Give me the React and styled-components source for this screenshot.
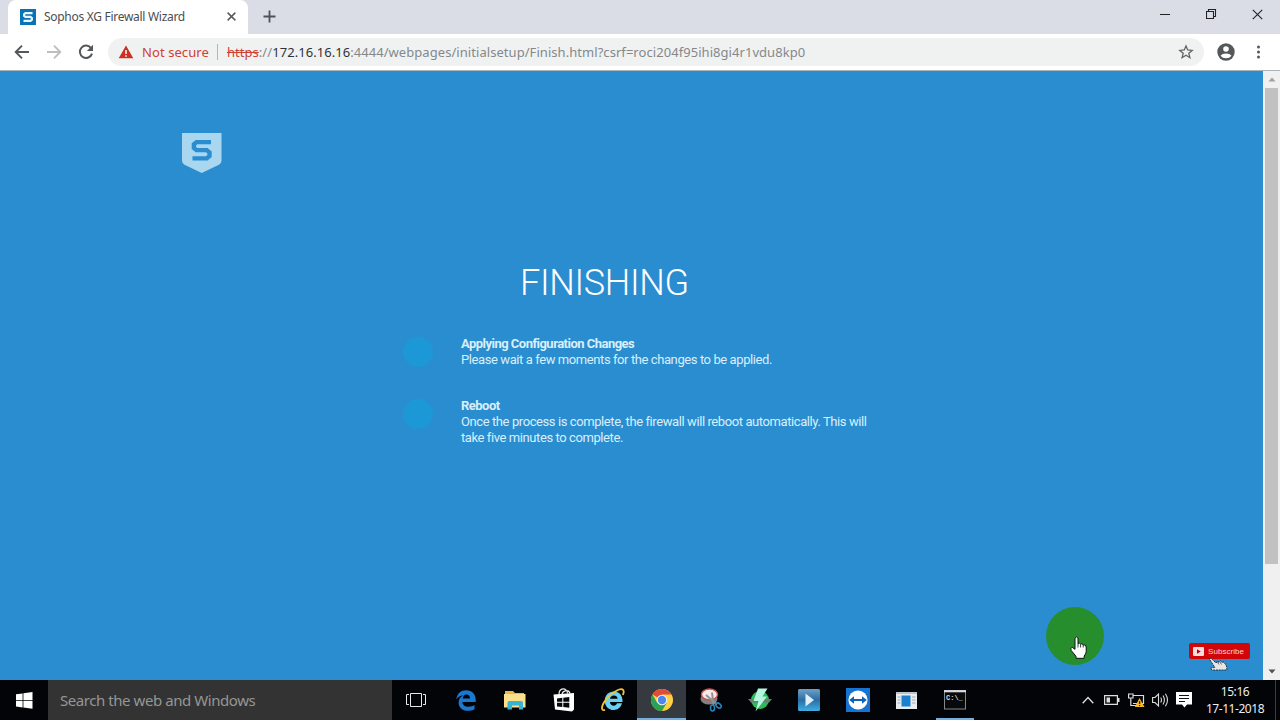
import styled, { createGlobalStyle } from "styled-components";

const GlobalStyle = createGlobalStyle`
  * {
    box-sizing: border-box;
  }

  body {
    margin: 0;
    overflow: hidden;
    font-family: "Open Sans", "Noto Sans", sans-serif;
  }

  svg {
    display: block;
    flex-shrink: 0;
  }
`;

const Screen = styled.div`
  position: relative;
  width: 1280px;
  height: 720px;
  display: flex;
  flex-direction: column;
  overflow: hidden;
`;

/* browser */

const TabStrip = styled.header`
  height: 34px;
  display: flex;
  align-items: stretch;
  padding-left: 8px;
  background-color: #dadde6;
`;

const Tab = styled.div`
  width: 240px;
  display: flex;
  align-items: center;
  padding: 0 12px 1px 12px;
  background-color: #ffffff;
  border-radius: 8px 8px 0 0;
`;

const TabTitle = styled.span`
  flex: 1;
  margin-left: 8px;
  font-family: "Noto Sans", sans-serif;
  font-size: 12px;
  letter-spacing: -0.29px;
  color: #4b4d50;
  white-space: nowrap;
`;

const NewTab = styled.div`
  display: flex;
  align-items: center;
  padding: 0 0 1px 15px;
`;

const WindowControls = styled.div`
  margin-left: auto;
  display: flex;
  align-items: center;
  gap: 34px;
  padding: 0 17px 6px 0;
`;

const Toolbar = styled.div`
  height: 37px;
  display: flex;
  align-items: center;
  padding: 0 12px 1px 14px;
  background-color: #ffffff;
  border-bottom: 1px solid #a9b3b8;
`;

const NavButtons = styled.div`
  display: flex;
  flex-shrink: 0;
  gap: 16px;
  width: 94px;
`;

const AddressBar = styled.div`
  width: 1096px;
  height: 28px;
  flex-shrink: 0;
  display: flex;
  align-items: center;
  padding: 0 10px;
  border-radius: 14px;
  background-color: #f0f2f2;
  font-family: "Noto Sans", sans-serif;
  font-size: 13px;
`;

const Warning = styled.span`
  margin-left: 8px;
  color: #cf4034;
  letter-spacing: 0.08px;
  white-space: nowrap;
`;

const Divider = styled.span`
  width: 1px;
  height: 16px;
  margin: 0 9px 0 8px;
  background-color: #b4b6b8;
`;

const Url = styled.span`
  flex: 1;
  color: #85888b;
  letter-spacing: 0.055px;
  white-space: nowrap;
`;

const Scheme = styled.s`
  color: #cf4034;
`;

const Host = styled.span`
  color: #303336;
`;

const ToolbarMenu = styled.div`
  display: flex;
  align-items: center;
  gap: 14px;
  margin-left: 13px;
`;

/* page */

const Viewport = styled.div`
  height: 609px;
  display: flex;
`;

const Page = styled.main`
  width: 1263px;
  display: flex;
  flex-direction: column;
  padding-top: 62px;
  background-color: #2a8dd0;
`;

const Brand = styled.div`
  height: 40px;
  padding-left: 182px;
`;

const Title = styled.h1`
  margin: 88px 0 0 520px;
  height: 44px;
  line-height: 44px;
  font-family: Roboto, sans-serif;
  font-size: 36px;
  font-weight: 300;
  letter-spacing: -0.3px;
  color: #ffffff;
`;

const Steps = styled.div`
  display: flex;
  flex-direction: column;
  gap: 30px;
  margin: 31px 0 0 403px;
`;

const Step = styled.section`
  display: flex;
  align-items: flex-start;
  gap: 28px;
`;

const StepDot = styled.div`
  width: 30px;
  height: 30px;
  margin-top: 1px;
  border-radius: 50%;
  background-color: #1d98d6;
`;

const StepText = styled.div`
  font-family: Roboto, sans-serif;
  font-size: 13px;
  line-height: 16px;
  color: #d8effc;
`;

const StepTitle = styled.strong`
  display: block;
  font-weight: 700;
  letter-spacing: -0.52px;
  color: #d8effc;
`;

const StepLine = styled.span`
  display: block;
  letter-spacing: -0.41px;
  white-space: nowrap;
`;

const Scrollbar = styled.div`
  width: 17px;
  display: flex;
  flex-direction: column;
  align-items: center;
  background-color: #f0f0f0;
`;

const ScrollButton = styled.div`
  height: 17px;
  display: flex;
  align-items: center;
`;

const ScrollThumb = styled.div`
  width: 13px;
  height: 476px;
  margin-bottom: auto;
  background-color: #c1c1c1;
`;

/* taskbar */

const Taskbar = styled.footer`
  height: 40px;
  display: flex;
  background-color: #020407;
`;

const StartButton = styled.div`
  width: 48px;
  display: flex;
  align-items: center;
  justify-content: center;
`;

const SearchBox = styled.div`
  width: 344px;
  display: flex;
  align-items: center;
  padding: 0 12px;
  background-color: #333333;
  color: #969696;
  font-family: "Noto Sans", sans-serif;
  font-size: 15px;
  letter-spacing: -0.44px;
  white-space: nowrap;
`;

const TaskList = styled.div`
  display: flex;
`;

const TaskItem = styled.div`
  width: 49px;
  height: 40px;
  display: flex;
  align-items: center;
  justify-content: center;
  background-color: ${(props) => (props.$active ? "#343a40" : "transparent")};
  border-bottom: 2px solid ${(props) => (props.$active ? "#76aede" : "transparent")};
  padding-top: 2px;
`;

const RunningItem = styled(TaskItem)`
  width: 38px;
  margin-left: 5px;
  border-bottom-color: #76aede;
`;

const Tray = styled.div`
  margin-left: auto;
  display: flex;
  align-items: center;
  gap: 4px;
`;

const TrayIcon = styled.div`
  width: 20px;
  display: flex;
  justify-content: center;
`;

const Clock = styled.div`
  width: 76px;
  font-family: "Noto Sans", sans-serif;
  font-size: 12px;
  line-height: 17px;
  letter-spacing: -0.45px;
  text-align: center;
  color: #ededed;
  white-space: nowrap;
  padding: 0 2px 1px 0;
`;

const ShowDesktop = styled.div`
  width: 5px;
  height: 40px;
  margin-left: -3px;
  border-left: 1px solid #3c3e41;
`;

/* things floating over the desktop */

const ClickHighlight = styled.div`
  position: absolute;
  left: 1046px;
  top: 607px;
  width: 58px;
  height: 58px;
  padding: 29px 0 0 24px;
  border-radius: 50%;
  background-color: #278e2e;
`;

const Subscribe = styled.div`
  position: absolute;
  left: 1189px;
  top: 643px;
  width: 61px;
  height: 16px;
  display: flex;
  align-items: center;
  gap: 4px;
  padding-left: 4px;
  border-radius: 2px;
  background-color: #d20508;
  color: #f3d5d5;
  font-family: "Liberation Sans", Arial, sans-serif;
  font-size: 8px;
  letter-spacing: 0.05px;
`;

const SubscribeHand = styled.div`
  position: absolute;
  left: 1208px;
  top: 658px;
`;

const SophosS = ({ color, width }) => (
  <path
    d="M19.5 2.5H5L2.4 4.7V8.3L5 10.5H15.3L18 12.8V16.5L15.3 18.8H1"
    fill="none"
    stroke={color}
    strokeWidth={width}
  />
);

const Favicon = () => (
  <svg width="16" height="16" viewBox="0 0 16 16">
    <rect width="16" height="16" fill="#0873b5" />
    <g transform="translate(3 3) scale(.49 .47)">
      <SophosS color="#e8f6fc" width="4.6" />
    </g>
  </svg>
);

const SophosShield = () => (
  <svg width="40" height="40" viewBox="0 0 40 40">
    <path d="M0 0H39.5V27.5Q39.5 30.5 37 31.8L19.7 40L2.5 31.8Q0 30.5 0 27.5Z" fill="#a9d7ef" />
    <g transform="translate(9.5 6.6)">
      <SophosS color="#2a8dd0" width="4.4" />
    </g>
  </svg>
);

const Cross = ({ size, color, width }) => (
  <svg width={size} height={size} viewBox="0 0 10 10">
    <path d="M.7 .7L9.3 9.3M9.3 .7L.7 9.3" stroke={color} strokeWidth={width} />
  </svg>
);

const Arrow = ({ color, flip }) => (
  <svg width="16" height="16" viewBox="0 0 16 16">
    <path
      d="M15 8H2M8 1.7L1.7 8L8 14.3"
      transform={flip ? "translate(16 0) scale(-1 1)" : undefined}
      fill="none"
      stroke={color}
      strokeWidth="1.9"
    />
  </svg>
);

const Reload = () => (
  <svg width="16" height="16" viewBox="0 0 16 16">
    <path d="M13.2 4.3A6.2 6.2 0 1 0 14 9.6" fill="none" stroke="#55585b" strokeWidth="2" />
    <path d="M15 .8V7H8.8Z" fill="#55585b" />
  </svg>
);

const Hand = () => (
  <svg width="17" height="23" viewBox="0 0 17 23">
    <path
      d="M5 2.2Q6.5 -.5 8 2.2V7.5Q9.5 6.5 10.6 8Q12 7.2 13.2 8.8Q16 8.2 16.2 11V15.5Q16 18 14.2 20V22.3H6V20.3L1.2 14.5Q-.2 12 2.2 11.3L5 13.3Z"
      fill="#fff"
      stroke="#111"
    />
    <path d="M8 7.5V11.5M10.6 8.2V11.5M13.2 9V11.5" stroke="#111" strokeWidth=".8" />
  </svg>
);

const WindowsLogo = () => (
  <svg width="17" height="17" viewBox="0 0 17 17" fill="#fff">
    <path d="M0 2.3L6.6 1.4V8H0ZM7.4 1.3L16.5 0V8H7.4ZM0 8.8H6.6V15.4L0 14.5ZM7.4 8.8H16.5V16.7L7.4 15.5Z" />
  </svg>
);

const TaskView = () => (
  <svg width="21" height="16" viewBox="0 0 21 16" fill="none" stroke="#e8e8e8">
    <path d="M4.5 1.5H15.5V14.5H4.5ZM3 2.5H.5V12.5H3M17 2.5H19.5V12.5H17" />
  </svg>
);

const Edge = () => (
  <svg width="20" height="21" viewBox="0 0 20 21">
    <path
      d="M.3 9.3C1 3.5 5 .3 10.1 .3C16 .3 19.7 4.5 19.7 9.4V12H6.4C6.7 15.3 9.3 16.8 12.5 16.8C15 16.8 17 16.1 18.5 15.1V19.2C16.5 20.3 14.4 20.8 11.8 20.8C6.2 20.8 2.6 17.6 2.6 12.5C2.6 9.1 4.5 6.5 7.5 5.2C4.3 5.4 2 6.9 .3 9.3ZM6.6 8.5H14C14 5.9 12.6 4.4 10.4 4.4C8.2 4.4 6.9 6.1 6.6 8.5Z"
      fill="#1a78cf"
    />
  </svg>
);

const Explorer = () => (
  <svg width="22" height="20" viewBox="0 0 22 20">
    <path d="M1 1H9L11 3H20V7H1Z" fill="#e8b84c" />
    <path d="M0 4H21.5V17.5H0Z" fill="#fbe08b" />
    <path d="M3.5 19.5V13Q3.5 11 5.5 11H17Q19 11 19 13V19.5H15V15.5H8V19.5Z" fill="#36b4d3" />
  </svg>
);

const Store = () => (
  <svg width="22" height="24" viewBox="0 0 22 24">
    <path d="M6 6.5C6 -.5 14 -1 14.5 5.5M9 6C10 2 16 1 17 5.5" fill="none" stroke="#eee" strokeWidth="1.2" />
    <path d="M.5 6.5L21 5V21.5L19 23.5L2 21.5Z" fill="#fff" />
    <path d="M4 10.5L9.3 9.8V13.8H4ZM10.3 9.7L16.3 9V13.8H10.3ZM4 14.8H9.3V19L4 18.5ZM10.3 14.8H16.3V19.7L10.3 19.1Z" fill="#06080b" />
  </svg>
);

const InternetExplorer = () => (
  <svg width="24" height="24" viewBox="0 0 24 24">
    <path
      d="M21 15.3C19.8 19.8 16.6 22 12.8 22C7.4 22 3.8 18.2 3.8 12.7C3.8 7.4 7.6 3.6 12.8 3.6C18.2 3.6 21.8 7.6 21.6 14H8.9C9.1 16.4 10.8 17.8 12.9 17.8C14.4 17.8 15.5 16.9 16 15.3ZM9 10.8H16.7C16.4 8.7 15 7.5 12.9 7.5C10.8 7.5 9.3 8.8 9 10.8Z"
      fill="#69d2f3"
    />
    <path
      d="M4 21.8C-.8 23.5 .3 16.8 6 10.3C11.8 3.7 20.1 -.7 22.3 2.2C23 3.2 22.7 5 21.8 7"
      fill="none"
      stroke="#f0c53a"
      strokeWidth="1.8"
    />
  </svg>
);

const Chrome = () => (
  <svg width="22" height="22" viewBox="0 0 22 22">
    <circle cx="11" cy="11" r="11" fill="#ffd140" />
    <path d="M11 11L1.47 5.5A11 11 0 0 1 20.53 5.5H11Z" fill="#e04b3c" />
    <path d="M1.47 5.5A11 11 0 0 0 11 22L15.8 13.7L11 11L6.2 13.7Z" fill="#2ba152" />
    <circle cx="11" cy="11" r="5.3" fill="#f1f1f1" />
    <circle cx="11" cy="11" r="4.2" fill="#4a88ee" />
  </svg>
);

const Snipping = () => (
  <svg width="22" height="24" viewBox="0 0 22 24">
    <ellipse cx="9" cy="11" rx="8.5" ry="5.5" fill="#818181" />
    <ellipse cx="9.5" cy="6.5" rx="8" ry="5.5" fill="#f8e9e8" stroke="#c8504e" strokeWidth="1.4" />
    <path d="M6 7L17 16.5M12 4.5L13.5 17" stroke="#8c9298" strokeWidth="2" />
    <g fill="none" stroke="#2683bb" strokeWidth="1.6">
      <ellipse cx="12.5" cy="20" rx="2" ry="3" />
      <ellipse cx="18.5" cy="17.5" rx="3" ry="2" transform="rotate(40 18.5 17.5)" />
    </g>
  </svg>
);

const Bolt = () => (
  <svg width="24" height="24" viewBox="0 0 24 24">
    <circle cx="12" cy="12" r="9" fill="#2fb95a" />
    <path d="M0 11H24L21 14.5H3Z" fill="#6d7a78" />
    <path d="M10 .5H19.5L14.5 8.5H19L7.5 23.5L10.5 13H5.5Z" fill="#b6f7e0" />
  </svg>
);

const MediaPlayer = () => (
  <svg width="22" height="22" viewBox="0 0 22 22">
    <defs>
      <linearGradient id="player" x1="0" y1="0" x2="0" y2="1">
        <stop offset="0" stopColor="#6fa0c5" />
        <stop offset=".5" stopColor="#2a6ea6" />
        <stop offset="1" stopColor="#3eaee0" />
      </linearGradient>
    </defs>
    <rect width="22" height="22" rx="1.5" fill="url(#player)" />
    <path d="M7.5 4.5L16 11L7.5 17.5Z" fill="#e5eef5" />
  </svg>
);

const TeamViewer = () => (
  <svg width="24" height="24" viewBox="0 0 24 24">
    <rect width="24" height="24" fill="#1673d2" />
    <circle cx="12" cy="12" r="9.6" fill="#fff" />
    <path d="M3.2 12L8 8.3V10.9H16V8.3L20.8 12L16 15.7V13.1H8V15.7Z" fill="#0d62b6" />
  </svg>
);

const WindowApp = () => (
  <svg width="21" height="17" viewBox="0 0 21 17">
    <rect width="21" height="17" fill="#e9edf0" />
    <rect width="21" height="2" fill="#b9c4cc" />
    <rect x="5.5" y="3.5" width="9" height="11" fill="#1b80d0" />
    <path d="M1.5 5H4.5M1.5 8H4.5M1.5 11H4.5M16 5H19.5M16 8H19.5M16 11H19.5" stroke="#a0a8af" />
  </svg>
);

const Terminal = () => (
  <svg width="22" height="20" viewBox="0 0 22 20">
    <rect x=".5" y=".5" width="21" height="18.5" fill="#07090a" stroke="#85888a" />
    <path d="M0 1.2H22" stroke="#d8dadc" strokeWidth="2.2" />
    <text x="2" y="9.5" fill="#dddddd" fontFamily="Liberation Mono, monospace" fontSize="7" fontWeight="700">
      C:\_
    </text>
  </svg>
);

const Volume = () => (
  <svg width="17" height="16" viewBox="0 0 17 16" fill="none" stroke="#dcdcdc" strokeWidth="1.1">
    <path d="M.6 5.5H3L6.5 2V14L3 10.5H.6Z" />
    <path d="M8.7 5.5Q10.3 8 8.7 10.5M11 3.5Q13.8 8 11 12.5M13.4 1.7Q17.6 8 13.4 14.3" />
  </svg>
);

const Network = () => (
  <svg width="17" height="15" viewBox="0 0 17 15">
    <path d="M5 2.5H15.5V10.5H5M.6 1H5V5H.6ZM2.8 5V12.5H8" fill="none" stroke="#dddddd" strokeWidth="1.2" />
    <path d="M11.5 5L16.5 14H6.8Z" fill="#f4b62b" />
    <path d="M11.6 8V11M11.6 12V13" stroke="#332500" strokeWidth="1.3" />
  </svg>
);

const App = () => {
  return (
    <>
      <GlobalStyle />
      <Screen>
        <TabStrip>
          <Tab>
            <Favicon />
            <TabTitle>Sophos XG Firewall Wizard</TabTitle>
            <Cross size={9} color="#55585b" width={1.6} />
          </Tab>
          <NewTab>
            <svg width="13" height="13" viewBox="0 0 13 13">
              <path d="M6.5 .5V12.5M.5 6.5H12.5" stroke="#4e5256" strokeWidth="1.8" />
            </svg>
          </NewTab>
          <WindowControls>
            <svg width="12" height="12" viewBox="0 0 12 12">
              <path d="M0 6.5H10" stroke="#222" />
            </svg>
            <svg width="12" height="12" viewBox="0 0 12 12">
              <path d="M.5 3.5H7.5V10.5H.5ZM2.5 3V1.5H9.5V8.5H8" fill="none" stroke="#222" strokeWidth="1.1" />
            </svg>
            <Cross size={11} color="#222" width={1} />
          </WindowControls>
        </TabStrip>

        <Toolbar>
          <NavButtons>
            <Arrow color="#55585b" />
            <Arrow color="#bcbebf" flip />
            <Reload />
          </NavButtons>
          <AddressBar>
            <svg width="16" height="14" viewBox="0 0 16 14">
              <path d="M8 .5L15.3 13.3H.7Z" fill="#cb3023" />
              <path d="M8 5V9M8 10.3V11.8" stroke="#fff" strokeWidth="1.5" />
            </svg>
            <Warning>Not secure</Warning>
            <Divider />
            <Url>
              <Scheme>https</Scheme>://<Host>172.16.16.16</Host>
              :4444/webpages/initialsetup/Finish.html?csrf=roci204f95ihi8gi4r1vdu8kp0
            </Url>
            <svg width="16" height="16" viewBox="0 0 16 16">
              <path
                d="M8 1.9L9.7 6L14.2 6.4L10.8 9.3L11.9 13.7L8 11.3L4.1 13.7L5.2 9.3L1.8 6.4L6.3 6Z"
                fill="none"
                stroke="#606366"
                strokeWidth="1.3"
              />
            </svg>
          </AddressBar>
          <ToolbarMenu>
            <svg width="18" height="18" viewBox="0 0 18 18">
              <circle cx="9" cy="9" r="8.7" fill="#55585b" />
              <circle cx="9" cy="6" r="2.8" fill="#fff" />
              <path d="M3.5 12.8Q5 10.5 9 10.5T14.5 12.8Q12.5 15.3 9 15.3T3.5 12.8Z" fill="#fff" />
            </svg>
            <svg width="18" height="14" viewBox="0 0 18 14" fill="#55585b">
              <circle cx="9.5" cy="2" r="1.5" />
              <circle cx="9.5" cy="7" r="1.5" />
              <circle cx="9.5" cy="12" r="1.5" />
            </svg>
          </ToolbarMenu>
        </Toolbar>

        <Viewport>
          <Page>
            <Brand>
              <SophosShield />
            </Brand>
            <Title>FINISHING</Title>
            <Steps>
              <Step>
                <StepDot />
                <StepText>
                  <StepTitle>Applying Configuration Changes</StepTitle>
                  <StepLine>Please wait a few moments for the changes to be applied.</StepLine>
                </StepText>
              </Step>
              <Step>
                <StepDot />
                <StepText>
                  <StepTitle>Reboot</StepTitle>
                  <StepLine>
                    Once the process is complete, the firewall will reboot automatically. This will
                  </StepLine>
                  <StepLine>take five minutes to complete.</StepLine>
                </StepText>
              </Step>
            </Steps>
          </Page>
          <Scrollbar>
            <ScrollButton>
              <svg width="8" height="5" viewBox="0 0 8 5">
                <path d="M4 .5L7.5 4.5H.5Z" fill="#a0a0a0" />
              </svg>
            </ScrollButton>
            <ScrollThumb />
            <ScrollButton>
              <svg width="8" height="5" viewBox="0 0 8 5">
                <path d="M4 4.5L7.5 .5H.5Z" fill="#505050" />
              </svg>
            </ScrollButton>
          </Scrollbar>
        </Viewport>

        <Taskbar>
          <StartButton>
            <WindowsLogo />
          </StartButton>
          <SearchBox>Search the web and Windows</SearchBox>
          <TaskList>
            <TaskItem><TaskView /></TaskItem>
            <TaskItem><Edge /></TaskItem>
            <TaskItem><Explorer /></TaskItem>
            <TaskItem><Store /></TaskItem>
            <TaskItem><InternetExplorer /></TaskItem>
            <TaskItem $active><Chrome /></TaskItem>
            <TaskItem><Snipping /></TaskItem>
            <TaskItem><Bolt /></TaskItem>
            <TaskItem><MediaPlayer /></TaskItem>
            <TaskItem><TeamViewer /></TaskItem>
            <TaskItem><WindowApp /></TaskItem>
            <RunningItem><Terminal /></RunningItem>
          </TaskList>
          <Tray>
            <TrayIcon>
              <svg width="12" height="8" viewBox="0 0 12 8">
                <path d="M.7 7.3L6 1.5L11.3 7.3" fill="none" stroke="#ddd" strokeWidth="1.3" />
              </svg>
            </TrayIcon>
            <TrayIcon>
              <svg width="16" height="10" viewBox="0 0 16 10">
                <path d="M.6 .6H13.4V9.4H.6Z" fill="none" stroke="#ddd" strokeWidth="1.2" />
                <path d="M2.5 2.5H6V7.5H2.5ZM14 3H15.5V7H14Z" fill="#ddd" />
              </svg>
            </TrayIcon>
            <TrayIcon><Network /></TrayIcon>
            <TrayIcon><Volume /></TrayIcon>
            <TrayIcon>
              <svg width="16" height="16" viewBox="0 0 16 16">
                <path d="M0 0H16V12.5H11L8.5 15.5L6 12.5H0Z" fill="#fff" />
                <path d="M3 3.5H13M3 6.5H13M3 9.5H9" stroke="#111" strokeWidth="1.1" />
              </svg>
            </TrayIcon>
            <Clock>
              15:16
              <br />
              17-11-2018
            </Clock>
            <ShowDesktop />
          </Tray>
        </Taskbar>

        <ClickHighlight>
          <Hand />
        </ClickHighlight>
        <Subscribe>
          <svg width="11" height="9" viewBox="0 0 11 9">
            <rect width="11" height="9" rx="1" fill="#f6dcdc" />
            <path d="M4 2.3L7.8 4.5L4 6.7Z" fill="#b50000" />
          </svg>
          Subscribe
        </Subscribe>
        <SubscribeHand>
          <svg width="20" height="13" viewBox="0 0 20 13">
            <path
              d="M1.2 .8Q3 -.3 4.5 1.7L8 5L9.2 3.4L11 4.2L12.5 3L14 4.4L16 4L18.5 8L19 12H4L2.3 10.3L6.8 9.3Z"
              fill="#e6e6e6"
              stroke="#222"
              strokeWidth=".9"
              strokeDasharray="2 .8"
            />
            <path d="M9.2 3.6L11 6.5M12 4L13.5 6.5" stroke="#333" strokeWidth=".7" />
          </svg>
        </SubscribeHand>
      </Screen>
    </>
  );
};

export default App;
